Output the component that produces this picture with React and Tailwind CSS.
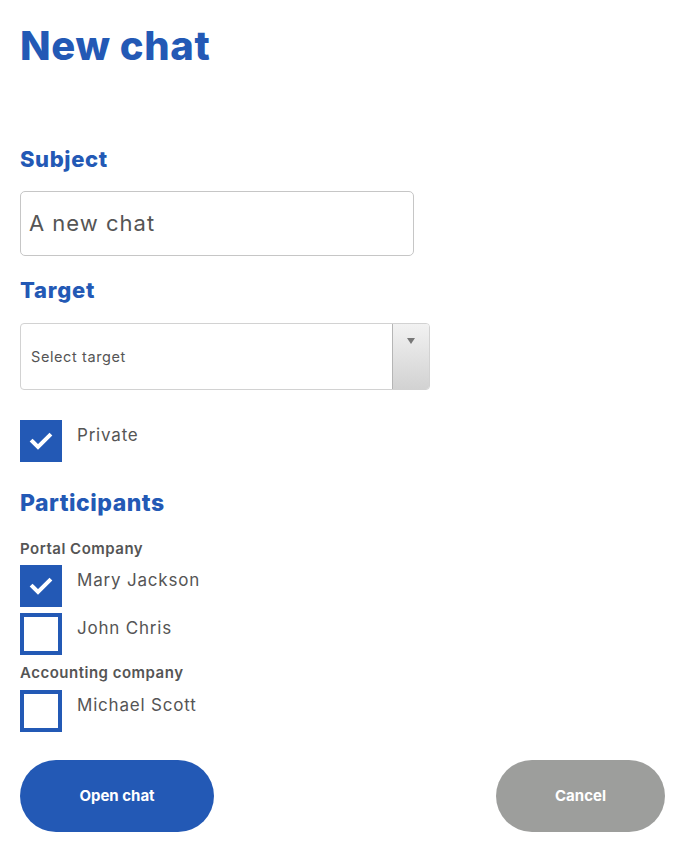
import React from "react";

const font = { fontFamily: "Inter, 'Noto Sans', sans-serif" };

function Check({ checked }) {
  return checked ? (
    <div className="w-[42px] h-[42px] bg-[#2359b5] flex items-center justify-center shrink-0">
      <svg width="24" height="24" viewBox="0 0 24 24" fill="none">
        <path d="M3.5 12.5l5.5 5.5L20.5 6.5" stroke="white" strokeWidth="4" strokeLinecap="square" />
      </svg>
    </div>
  ) : (
    <div className="w-[42px] h-[42px] border-[4px] border-[#2359b5] bg-white shrink-0" />
  );
}

function Row({ checked, label }) {
  return (
    <div className="flex items-start gap-[15px]">
      <Check checked={checked} />
      <span className="text-[17px] leading-[22px] text-[#555] pt-[4px] tracking-[0.8px]">{label}</span>
    </div>
  );
}

export default function App() {
  return (
    <div className="w-[680px] h-[847px] bg-white pl-5 pr-[15px] flex flex-col" style={font}>
      <h1 className="mt-[21px] text-[40px] leading-[50px] font-extrabold text-[#2359b5] tracking-[0.6px]">New chat</h1>
      <h2 className="mt-[74px] text-[22px] leading-[28px] font-extrabold text-[#2359b5] tracking-[0.6px]">Subject</h2>
      <div className="mt-[18px] w-[394px] h-[65px] border border-[#c6c6c6] rounded-[5px] flex items-center px-[8px] text-[22px] text-[#555] tracking-[1px]">
        A new chat
      </div>
      <h2 className="mt-[20px] text-[22px] leading-[28px] font-extrabold text-[#2359b5] tracking-[0.8px]">Target</h2>
      <div className="mt-[19px] w-[410px] h-[67px] border border-[#d2d2d2] rounded-[4px] flex overflow-hidden">
        <div className="flex-1 flex items-center px-[10px] text-[14.5px] text-[#555] tracking-[0.6px]">Select target</div>
        <div className="w-[37px] border-l border-[#b5b5b5] bg-gradient-to-b from-[#f2f2f2] to-[#d2d2d2] flex justify-center pt-[14px]">
          <svg width="8" height="6" viewBox="0 0 8 6"><path d="M0 0h8L4 6z" fill="#777" /></svg>
        </div>
      </div>
      <div className="mt-[30px]">
        <Row checked label="Private" />
      </div>
      <h2 className="mt-[26px] text-[23px] leading-[30px] font-extrabold text-[#2359b5] tracking-[0.5px]">Participants</h2>
      <div className="mt-[21px] text-[15px] leading-[20px] font-semibold text-[#555] tracking-[0.5px]">Portal Company</div>
      <div className="mt-[6px] flex flex-col gap-[6px]">
        <Row checked label="Mary Jackson" />
        <Row label="John Chris" />
      </div>
      <div className="mt-[8px] text-[15px] leading-[20px] font-semibold text-[#555] tracking-[0.5px]">Accounting company</div>
      <div className="mt-[7px]">
        <Row label="Michael Scott" />
      </div>
      <div className="mt-[28px] flex justify-between">
        <button className="w-[194px] h-[72px] rounded-full bg-[#2359b5] text-white text-[15px] font-bold">Open chat</button>
        <button className="w-[169px] h-[72px] rounded-full bg-[#9d9e9c] text-white text-[15px] font-bold">Cancel</button>
      </div>
    </div>
  );
}
